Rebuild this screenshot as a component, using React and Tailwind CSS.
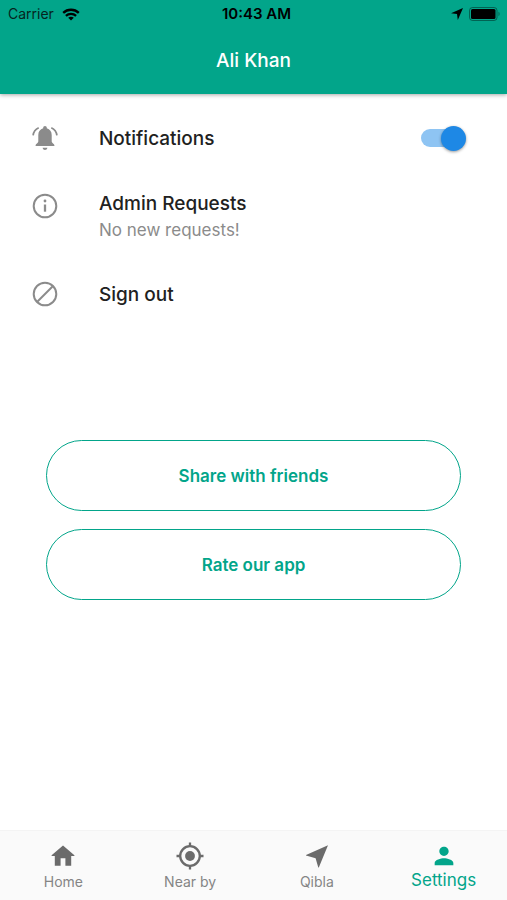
import { useState } from 'react';
import { MdPerson } from 'react-icons/md';

const BellIcon = ({ className }) => (
  <svg viewBox="0 0 32 32" className={className} fill="currentColor" aria-hidden="true">
    <path d="M16 4c-1 0-1.8.8-1.8 1.8v.5C11.1 7.1 9.3 9.6 9.3 13v6.4c0 1.2-2.7 2.6-2.7 3.8v.9h18.8v-.9c0-1.2-2.7-2.6-2.7-3.8V13c0-3.4-1.8-5.9-4.9-6.7v-.5C17.8 4.800 17 4 16 4z" />
    <path d="M13.600 25.800h4.800c-.3 1.400-1.200 2.200-2.400 2.200s-2.100-.8-2.400-2.200z" />
    <path d="M9.700 5.700C6.600 7.100 4.500 9.900 4.100 13.300M22.300 5.700c3.100 1.400 5.200 4.200 5.600 7.600" fill="none" stroke="currentColor" strokeWidth="1.700" />
  </svg>
);

const InfoIcon = ({ className }) => (
  <svg viewBox="0 0 32 32" className={className} fill="none" stroke="currentColor" strokeWidth="2" aria-hidden="true">
    <circle cx="16" cy="16" r="11.300" />
    <path d="M16 14.500v7.200" strokeWidth="2.300" />
    <circle cx="16" cy="11" r="1.400" fill="currentColor" stroke="none" />
  </svg>
);

const SignOutIcon = ({ className }) => (
  <svg viewBox="0 0 32 32" className={className} fill="none" stroke="currentColor" strokeWidth="2" aria-hidden="true">
    <circle cx="16" cy="16" r="11.300" />
    <path d="M8 24 24 8" />
  </svg>
);

const HomeIcon = ({ className }) => (
  <svg viewBox="0 0 28 28" className={className} fill="currentColor" aria-hidden="true">
    <path d="M14 3.500 2.600 13.300v.6h3.200v9.900h5.800v-7.600h4.800v7.600h5.800v-9.900h3.200v-.6z" />
  </svg>
);

const NearByIcon = ({ className }) => (
  <svg viewBox="0 0 28 28" className={className} fill="none" stroke="currentColor" strokeWidth="2.300" aria-hidden="true">
    <circle cx="14" cy="14" r="9.800" />
    <circle cx="14" cy="14" r="4.900" fill="currentColor" stroke="none" />
    <path d="M14 .5v4M14 23.500v4M.5 14h4M23.500 14h4" />
  </svg>
);

const QiblaIcon = ({ className }) => (
  <svg viewBox="0 0 28 28" className={className} fill="currentColor" aria-hidden="true">
    <path d="M25 3.300 3 13v.5l9.600 2.800 2.700 9.200h.5z" />
  </svg>
);

const tabs = [
  { label: 'Home', icon: HomeIcon },
  { label: 'Near by', icon: NearByIcon },
  { label: 'Qibla', icon: QiblaIcon },
  { label: 'Settings', icon: MdPerson },
];

const StatusBar = () => (
  <div className="grid grid-cols-3 items-center h-7 pl-2 pr-1.5 text-[#06241e]">
    <div className="flex items-center gap-2 text-sm">
      <span>Carrier</span>
      <svg viewBox="0 0 18 13" className="w-[18px] h-[13px] text-black" fill="none" stroke="currentColor" strokeWidth="2.3" aria-hidden="true">
        <path d="M1.2 4.9C5.6.7 12.4.7 16.8 4.9" />
        <path d="M3.9 7.8c2.9-2.7 7.3-2.7 10.2 0" />
        <path d="M9 12.6 6.2 9.8c1.6-1.4 4-1.4 5.6 0z" fill="currentColor" stroke="none" />
      </svg>
    </div>
    <span className="pl-1 text-[15px] leading-5 font-semibold text-center text-black">10:43 AM</span>
    <div className="flex items-center justify-end gap-1.5 text-black">
      <svg viewBox="0 0 12 12" className="w-3 h-3" fill="currentColor" aria-hidden="true">
        <path d="M12 0 6.8 12 6 6 0 5.3z" />
      </svg>
      <svg viewBox="0 0 32 14" className="w-8 h-3.5" aria-hidden="true">
        <rect x=".5" y=".5" width="27.5" height="13" rx="3" fill="none" stroke="#000" strokeOpacity=".4" />
        <rect x="2" y="2" width="24.5" height="10" rx="1.5" fill="#000" />
        <path d="M29.5 4.8c1.4.4 1.4 4 0 4.4z" fill="#000" fillOpacity=".4" />
      </svg>
    </div>
  </div>
);

const App = () => {
  const [notifications, setNotifications] = useState(true);
  const [active, setActive] = useState('Settings');

  return (
    <div className="flex flex-col min-h-screen bg-white font-['Inter',sans-serif] text-[#212121]">
      <header className="relative bg-[#02a58a] shadow-[0_1px_4px_rgba(0,0,0,0.35)]">
        <StatusBar />
        <h1 className="flex items-center justify-center h-[66px] text-[19px] leading-6 font-medium text-white">
          Ali Khan
        </h1>
      </header>

      <main className="flex-1">
        <ul className="text-[19px] leading-6">
          <li className="flex items-center h-[88px] pl-[29px] pr-10">
            <BellIcon className="w-8 h-8 mr-[38px] text-[#8b8b8b]" />
            <label htmlFor="notifications" className="flex-1 pt-0.5 font-medium">
              Notifications
            </label>
            <span className="relative flex items-center w-[46px] h-7">
              <input
                id="notifications"
                type="checkbox"
                role="switch"
                checked={notifications}
                onChange={(e) => setNotifications(e.target.checked)}
                className="peer appearance-none w-11 h-[18px] rounded-full bg-gray-300 checked:bg-[#8ec4f3] cursor-pointer"
              />
              <span className="absolute left-0 w-[25px] h-[25px] rounded-full bg-white shadow-[0_1px_3px_rgba(0,0,0,0.4)] pointer-events-none peer-checked:left-5 peer-checked:bg-[#1e88e5]" />
            </span>
          </li>
          <li>
            <button type="button" className="flex items-start w-full h-[68px] pt-2 pl-[29px] text-left">
              <InfoIcon className="w-8 h-8 mr-[38px] text-[#8b8b8b]" />
              <span className="flex flex-col pt-0.5">
                <span className="font-medium">Admin Requests</span>
                <span className="text-[17px] leading-7 text-[#8b8b8b]">No new requests!</span>
              </span>
            </button>
          </li>
          <li>
            <button type="button" className="flex items-center w-full h-[88px] pl-[29px] text-left">
              <SignOutIcon className="w-8 h-8 mr-[38px] text-[#8b8b8b]" />
              <span className="pt-0.5 font-medium">Sign out</span>
            </button>
          </li>
        </ul>

        <div className="flex flex-col gap-[18px] px-[46px] mt-[102px] pb-6">
          <button type="button" className="h-[71px] rounded-full border border-[#02a58a] text-[17px] leading-6 font-semibold text-[#02a58a]">
            Share with friends
          </button>
          <button type="button" className="h-[71px] rounded-full border border-[#02a58a] text-[17px] leading-6 font-semibold text-[#02a58a]">
            Rate our app
          </button>
        </div>
      </main>

      <nav className="grid grid-cols-4 h-[70px] bg-[#fafafa] border-t border-[#f4f4f4]">
        {tabs.map(({ label, icon: Icon }) => {
          const selected = active === label;
          return (
            <button
              key={label}
              type="button"
              onClick={() => setActive(label)}
              className={`flex flex-col items-center pt-[11px] ${selected ? 'text-[#02a58a]' : 'text-[#6b6b6b]'}`}
            >
              <Icon className="w-7 h-7" />
              <span className={selected ? 'text-[17px] leading-5' : 'text-sm leading-6 text-[#858585]'}>{label}</span>
            </button>
          );
        })}
      </nav>
    </div>
  );
};

export default App;
